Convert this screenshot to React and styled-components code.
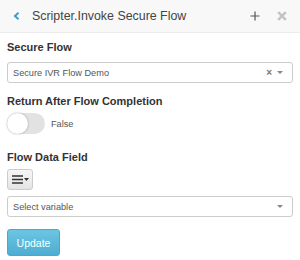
import React from 'react'
import styled, { createGlobalStyle } from 'styled-components'

const Global = createGlobalStyle`
    html, body {
        margin: 0;
        padding: 0;
        background: #fff;
    }
    body {
        font-family: 'Liberation Sans', Arial, sans-serif;
        color: #333;
    }
`

const Panel = styled.div`
    width: 300px;
    height: 260px;
    overflow: hidden;
    background: #fff;
`

const Header = styled.div`
    height: 33px;
    box-sizing: border-box;
    background: #f8f8f8;
    border-bottom: 1px solid #ececec;
    display: flex;
    align-items: center;
    padding: 0 13px 0 13px;
`

const Back = styled.span`
    color: #3a9fd0;
    display: flex;
    align-items: center;
    width: 19px;
`

const Title = styled.div`
    flex: 1;
    font-size: 12.4px;
    color: #444;
`

const HeaderIcon = styled.span`
    color: ${props => props.$muted ? '#c4c4c4' : '#555'};
    display: flex;
    align-items: center;
    margin-left: ${props => props.$gap || 0}px;
`

const Body = styled.div`
    padding: 8px 7px 0 7px;
    display: flex;
    flex-direction: column;
`

const Label = styled.div`
    font-size: 11px;
    line-height: 13px;
    font-weight: 700;
    color: #333;
    margin-top: ${props => props.$top || 0}px;
    margin-bottom: ${props => props.$bottom || 8}px;
`

const Select = styled.div`
    height: 21px;
    box-sizing: border-box;
    border: 1px solid #ccc;
    border-radius: 3px;
    display: flex;
    align-items: center;
    padding: 0 9px 0 5px;
    font-size: 9.2px;
    color: #555;
`

const SelectText = styled.span`
    flex: 1;
`

const Clear = styled.span`
    color: #777;
    font-size: 10px;
    font-weight: 700;
    margin-right: 5px;
`

const Caret = styled.span`
    width: 0;
    height: 0;
    border-left: 3px solid transparent;
    border-right: 3px solid transparent;
    border-top: 3px solid #888;
`

const ToggleRow = styled.div`
    display: flex;
    align-items: center;
    gap: 6px;
`

const Track = styled.div`
    width: 38px;
    height: 21px;
    border-radius: 11px;
    background: #e2e2e2;
    position: relative;
`

const Knob = styled.div`
    position: absolute;
    left: 0;
    top: 0;
    width: 21px;
    height: 21px;
    border-radius: 50%;
    background: #fff;
    box-shadow: 0 0 2px rgba(0, 0, 0, 0.35);
`

const ToggleText = styled.span`
    font-size: 9.2px;
    color: #555;
`

const MenuButton = styled.div`
    width: 26px;
    height: 21px;
    box-sizing: border-box;
    border: 1px solid #ccc;
    border-radius: 3px;
    background: linear-gradient(#f6f6f6, #e4e4e4);
    display: flex;
    align-items: center;
    justify-content: center;
    gap: 1px;
    margin-bottom: 6px;
`

const UpdateButton = styled.div`
    width: 53px;
    height: 27px;
    border-radius: 3px;
    background: linear-gradient(#6cc5e2, #4eadd2);
    border: 1px solid #4aa8cb;
    box-sizing: border-box;
    color: #fff;
    font-size: 10.5px;
    display: flex;
    align-items: center;
    justify-content: center;
    margin-top: 12px;
`

export default function App() {
    return (
        <Panel>
            <Global />
            <Header>
                <Back>
                    <svg width="7" height="8" viewBox="0 0 7 8">
                        <path d="M5.5 0.8 L2 4 L5.5 7.2" stroke="currentColor" strokeWidth="2" fill="none" />
                    </svg>
                </Back>
                <Title>Scripter.Invoke Secure Flow</Title>
                <HeaderIcon>
                    <svg width="10" height="10" viewBox="0 0 10 10">
                        <path d="M5 0.5 V9.5 M0.5 5 H9.5" stroke="currentColor" strokeWidth="1.2" />
                    </svg>
                </HeaderIcon>
                <HeaderIcon $muted $gap={17}>
                    <svg width="10" height="10" viewBox="0 0 10 10">
                        <path d="M1.2 1.2 L8.8 8.8 M8.8 1.2 L1.2 8.8" stroke="currentColor" strokeWidth="2.6" />
                    </svg>
                </HeaderIcon>
            </Header>
            <Body>
                <Label>Secure Flow</Label>
                <Select>
                    <SelectText>Secure IVR Flow Demo</SelectText>
                    <Clear>×</Clear>
                    <Caret />
                </Select>
                <Label $top={12} $bottom={5}>Return After Flow Completion</Label>
                <ToggleRow>
                    <Track><Knob /></Track>
                    <ToggleText>False</ToggleText>
                </ToggleRow>
                <Label $top={17} $bottom={5}>Flow Data Field</Label>
                <MenuButton>
                    <svg width="11" height="9" viewBox="0 0 11 9">
                        <path d="M0 1 H11 M0 4.5 H11 M0 8 H11" stroke="#333" strokeWidth="1.6" />
                    </svg>
                    <svg width="5" height="3" viewBox="0 0 5 3">
                        <path d="M0 0 H5 L2.5 3 Z" fill="#333" />
                    </svg>
                </MenuButton>
                <Select>
                    <SelectText>Select variable</SelectText>
                    <Caret />
                </Select>
                <UpdateButton>Update</UpdateButton>
            </Body>
        </Panel>
    )
}
